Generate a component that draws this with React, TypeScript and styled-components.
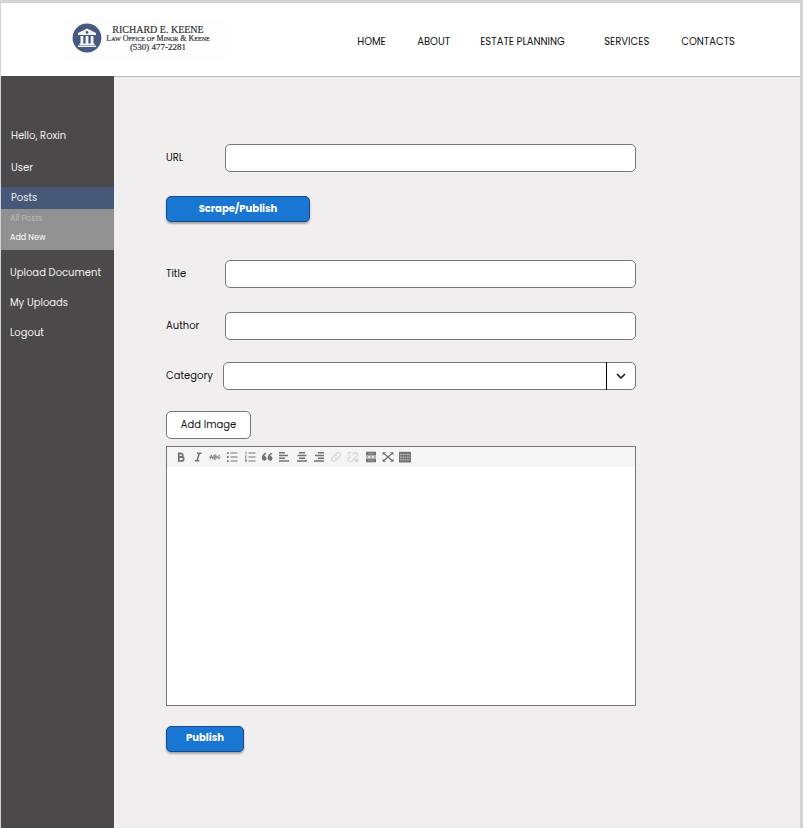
import React from "react";
import styled, { createGlobalStyle } from "styled-components";

const GlobalStyle = createGlobalStyle`
  *, *::before, *::after { box-sizing: border-box; }
  body {
    margin: 0;
    background: #d4d3d3;
    color: #111;
    font-family: Poppins, Inter, "Liberation Sans", sans-serif;
    font-size: 10px;
    line-height: 16px;
  }
  button, input, select, textarea { font: inherit; color: inherit; margin: 0; }
  a { color: inherit; text-decoration: none; }
`;

const Page = styled.div`
  display: flex;
  flex-direction: column;
  min-height: 100vh;
  padding: 3px 3px 0 1px;
`;

const Header = styled.header`
  display: flex;
  align-items: center;
  justify-content: space-between;
  height: 73px;
  padding: 0 65px 0 64px;
  background: #fff;
`;

const Brand = styled.a`
  display: flex;
  align-items: center;
  gap: 3px;
  width: 160px;
  height: 41px;
  margin-bottom: 3px;
  padding: 0 14px 0 7px;
  background: #fdfdfd;
`;

const BrandText = styled.span`
  display: flex;
  flex: 1;
  flex-direction: column;
  align-items: center;
  font-family: "Liberation Serif", serif;
  line-height: 9px;
  color: #35353a;
  white-space: nowrap;
`;

const BrandLine = styled.span<{ $size: number; $caps?: boolean }>`
  font-size: ${(p) => p.$size}px;
  font-variant-caps: ${(p) => (p.$caps ? "small-caps" : "normal")};
  -webkit-text-stroke: 0.2px;
`;

const Nav = styled.nav`
  display: grid;
  grid-template-columns: 60px 63px 124px 77px auto;
  margin-top: 4px;
  font-size: 10px;
  white-space: nowrap;
`;

const Body = styled.div`
  display: flex;
  flex: 1;
`;

const Sidebar = styled.nav`
  width: 113px;
  flex: none;
  padding-top: 50px;
  background: #4b4949;
  color: #f1f1f1;
  font-size: 10px;
`;

const SideList = styled.ul<{ $gap: number }>`
  display: flex;
  flex-direction: column;
  gap: ${(p) => p.$gap}px;
  margin: 0;
  padding: 0;
  list-style: none;
`;

const SideLink = styled.a<{ $indent: number; $active?: boolean }>`
  display: block;
  padding: ${(p) => (p.$active ? 3 : 2)}px 0 ${(p) => (p.$active ? 3 : 2)}px ${(p) => p.$indent}px;
  background: ${(p) => (p.$active ? "#455878" : "transparent")};
  white-space: nowrap;
`;

const PostsGroup = styled.div`
  margin: 9px 0 13px;
`;

const SubMenu = styled.div`
  display: flex;
  flex-direction: column;
  gap: 3px;
  padding: 2px 0 4px 9px;
  background: #929191;
  font-size: 8px;
`;

const SubLink = styled.a<{ $muted?: boolean }>`
  color: ${(p) => (p.$muted ? "#b9b8b8" : "#fff")};
`;

const Main = styled.main`
  flex: 1;
  padding: 67px 164px 64px 52px;
  border-top: 1px solid #b5b8b7;
  background: #f0eeef;
`;

const Form = styled.form`
  display: flex;
  flex-direction: column;
  align-items: flex-start;
`;

const Field = styled.div<{ $after: number; $label?: number }>`
  display: grid;
  grid-template-columns: ${(p) => p.$label ?? 59}px 1fr;
  align-items: center;
  width: 100%;
  margin-bottom: ${(p) => p.$after}px;
`;

const Label = styled.label`
  font-size: 10px;
`;

const TextInput = styled.input`
  width: 100%;
  height: 28px;
  padding: 0 8px;
  border: 1px solid #777677;
  border-radius: 5px;
  background: #fff;
`;

const SelectBox = styled.div`
  position: relative;
`;

const Select = styled.select`
  display: block;
  appearance: none;
  width: 100%;
  height: 28px;
  padding: 0 36px 0 8px;
  border: 1px solid #777677;
  border-radius: 5px;
  background: #fff;
`;

const SelectArrow = styled.span`
  position: absolute;
  inset: 0 0 0 auto;
  display: grid;
  place-items: center;
  width: 30px;
  padding: 0 2px 1px 0;
  border-left: 1px solid #000;
  pointer-events: none;
`;

const PrimaryButton = styled.button<{ $wide?: boolean }>`
  width: ${(p) => (p.$wide ? 144 : 78)}px;
  height: 26px;
  margin-bottom: ${(p) => (p.$wide ? 38 : 0)}px;
  padding: 0 0 ${(p) => (p.$wide ? 0 : 2)}px;
  border: 1px solid #174a86;
  border-radius: 5px;
  background: #1976d2;
  box-shadow: 0 2px 2px #a6a6aa;
  color: #fff;
  font-weight: 700;
`;

const PlainButton = styled.button`
  width: 85px;
  height: 28px;
  margin-bottom: 7px;
  padding: 0;
  border: 1px solid #777677;
  border-radius: 5px;
  background: #fff;
`;

const Editor = styled.div`
  width: 100%;
  margin-bottom: 20px;
  border: 1px solid #777677;
  background: #fff;
`;

const Toolbar = styled.div`
  display: flex;
  height: 20px;
  padding: 0 0 1px 5px;
  background: #f5f5f5;
`;

const Tools = styled.div`
  display: flex;
  width: 242px;
`;

const Tool = styled.button<{ $faint?: boolean }>`
  display: grid;
  place-items: center;
  flex: 1;
  padding: 0;
  border: 0;
  background: none;
  color: ${(p) => (p.$faint ? "#dadada" : "#727272")};
`;

const EditorArea = styled.textarea`
  display: block;
  width: 100%;
  height: 238px;
  padding: 8px;
  border: 0;
  outline: 0;
  resize: none;
  background: #fff;
`;

const Emblem = () => (
  <svg width="30" height="30" viewBox="0 0 30 30" aria-hidden="true">
    <circle cx="15" cy="15" r="14.4" fill="#455a7e" />
    <g fill="#f3f5f8">
      <path d="M15 5.5 24 10v2H6v-2z" />
      <path d="M8.5 13h2.8v8H8.5zM13.6 13h2.8v8h-2.8zM18.7 13h2.8v8h-2.8z" />
      <path d="M7.5 20.5h15v1.4h-15zM6 22.4h18V24H6z" />
    </g>
    <circle cx="15" cy="9.4" r="1.3" fill="#455a7e" />
  </svg>
);

const stroke = { fill: "none", stroke: "currentColor", strokeWidth: 1.5 };

const tools: { name: string; faint?: boolean; art: React.ReactNode }[] = [
  {
    name: "Bold",
    art: <path d="M3.8 2.5h2.7a1.8 1.8 0 0 1 0 3.5H3.8zM3.8 6h3a1.9 1.9 0 0 1 0 3.8h-3z" {...stroke} strokeWidth={1.8} />,
  },
  { name: "Italic", art: <path d="M5 2.2h4.5M2.800 9.8h4.5M7.3 2.2 5 9.8" {...stroke} /> },
  {
    name: "Strikethrough",
    art: (
      <>
        <path
          d="M1 8.2 2.4 4l1.4 4.200M5 4v4.200h1.200a1 1 0 0 0 0-2.100 1 1 0 0 0 0-2.100zM11 4.500a1.700 1.700 0 1 0 0 3.200"
          {...stroke}
          strokeWidth={0.9}
        />
        <path d="M.3 6.200h11.400" {...stroke} strokeWidth={0.8} />
      </>
    ),
  },
  {
    name: "Bulleted list",
    art: (
      <>
        <path d="M4.500 2h7M4.500 6h7M4.500 10h7" {...stroke} strokeWidth={1.1} />
        <path d="M1 1.200h1.700v1.700H1zM1 5.200h1.700v1.700H1zM1 9.200h1.700v1.700H1z" fill="currentColor" />
      </>
    ),
  },
  {
    name: "Numbered list",
    art: (
      <>
        <path d="M4.500 2h7M4.500 6h7M4.500 10h7" {...stroke} strokeWidth={1.1} />
        <path d="M1.200 1.200h.9v2.300M1 4.900h1.300L1.100 7h1.400M1 8.500h1.300v1H1.400h.9v1.200H1" {...stroke} strokeWidth={0.7} />
      </>
    ),
  },
  {
    name: "Quote",
    art: (
      <path
        d="M5.300 1.800C2.500 2.100.8 4.200.8 7.300a2.400 2.400 0 1 0 2.700-2.400C3.600 4 4.200 3.300 5.300 3.100zM11.200 1.800C8.400 2.100 6.700 4.200 6.700 7.300a2.400 2.400 0 1 0 2.700-2.400C9.500 4 10.100 3.300 11.200 3.100z"
        fill="currentColor"
      />
    ),
  },
  { name: "Align left", art: <path d="M1 1.700h6M1 4.500h9M1 7.300h6M1 10.100h10" {...stroke} /> },
  { name: "Align center", art: <path d="M3 1.700h6M1.500 4.500h9M3 7.300h6M1 10.100h10" {...stroke} /> },
  { name: "Align right", art: <path d="M5 1.700h6M2 4.500h9M5 7.300h6M1 10.100h10" {...stroke} /> },
  {
    name: "Insert link",
    faint: true,
    art: (
      <path
        d="m5.500 3.400 1.300-1.300a2.200 2.200 0 0 1 3.100 3.100L8.200 6.900a2.200 2.200 0 0 1-3 0M6.500 8.600 5.200 9.900a2.200 2.200 0 0 1-3.100-3.100l1.700-1.700a2.200 2.200 0 0 1 3 0"
        {...stroke}
      />
    ),
  },
  {
    name: "Remove link",
    faint: true,
    art: (
      <path
        d="m5.500 3.400 1.300-1.300a2.200 2.200 0 0 1 3.100 3.100L4.800 10.200a2.200 2.200 0 0 1-3.100-3.100l1.700-1.700M1.500 4.500v-3h3M7.500 10.500h3v-3M7.500 7.500l3 3"
        {...stroke}
      />
    ),
  },
  {
    name: "Insert more tag",
    art: (
      <>
        <path d="M1 .8h10v3.600H1zM1 7.600h10v3.600H1z" fill="currentColor" />
        <path d="M1 6h2.400M4.800 6h2.400M8.600 6H11" {...stroke} strokeWidth={1.100} />
        <path d="M3 2.600h6M3 9.400h6" stroke="#aaa" strokeWidth=".7" />
      </>
    ),
  },
  {
    name: "Fullscreen",
    art: (
      <>
        <path d="m2 2.500 8 7M10 2.500l-8 7" {...stroke} strokeWidth={1.2} />
        <path d="M.5 1.200H4L.5 4.300zM11.500 1.200H8l3.500 3.100zM.5 10.800H4L.5 7.700zM11.500 10.800H8l3.500-3.100z" fill="currentColor" />
      </>
    ),
  },
  {
    name: "Toolbar toggle",
    art: (
      <>
        <path d="M0 .8h12v10.700H0z" fill="currentColor" />
        <path d="M1 3.600h10M1 6.200h10M1 8.800h10" stroke="#d6d6d6" strokeWidth=".9" strokeDasharray="1.700 .6" />
      </>
    ),
  },
];

export default function App() {
  return (
    <>
      <GlobalStyle />
      <Page>
        <Header>
          <Brand href="#home">
            <Emblem />
            <BrandText>
              <BrandLine $size={10}>RICHARD E. KEENE</BrandLine>
              <BrandLine $size={8} $caps>Law Office of Minor &amp; Keene</BrandLine>
              <BrandLine $size={9}>(530) 477-2281</BrandLine>
            </BrandText>
          </Brand>
          <Nav aria-label="Main">
            <a href="#home">HOME</a>
            <a href="#about">ABOUT</a>
            <a href="#estate-planning">ESTATE PLANNING</a>
            <a href="#services">SERVICES</a>
            <a href="#contacts">CONTACTS</a>
          </Nav>
        </Header>
        <Body>
          <Sidebar aria-label="Account">
            <SideList $gap={12}>
              <li><SideLink href="#profile" $indent={10}>Hello, Roxin</SideLink></li>
              <li><SideLink href="#user" $indent={10}>User</SideLink></li>
            </SideList>
            <PostsGroup>
              <SideLink href="#posts" $indent={10} $active>Posts</SideLink>
              <SubMenu>
                <SubLink href="#all-posts" $muted>All Posts</SubLink>
                <SubLink href="#add-new">Add New</SubLink>
              </SubMenu>
            </PostsGroup>
            <SideList $gap={10}>
              <li><SideLink href="#upload" $indent={9}>Upload Document</SideLink></li>
              <li><SideLink href="#my-uploads" $indent={9}>My Uploads</SideLink></li>
              <li><SideLink href="#logout" $indent={9}>Logout</SideLink></li>
            </SideList>
          </Sidebar>
          <Main>
            <Form onSubmit={(e) => e.preventDefault()}>
              <Field $after={24}>
                <Label htmlFor="url">URL</Label>
                <TextInput id="url" type="url" />
              </Field>
              <PrimaryButton type="button" $wide>Scrape/Publish</PrimaryButton>
              <Field $after={24}>
                <Label htmlFor="title">Title</Label>
                <TextInput id="title" type="text" />
              </Field>
              <Field $after={22}>
                <Label htmlFor="author">Author</Label>
                <TextInput id="author" type="text" />
              </Field>
              <Field $after={21} $label={57}>
                <Label htmlFor="category">Category</Label>
                <SelectBox>
                  <Select id="category" defaultValue="">
                    <option value="" />
                  </Select>
                  <SelectArrow>
                    <svg width="10" height="6" viewBox="0 0 10 6" aria-hidden="true">
                      <path d="m1 1 4 4 4-4" fill="none" stroke="#111" strokeWidth="1.5" />
                    </svg>
                  </SelectArrow>
                </SelectBox>
              </Field>
              <PlainButton type="button">Add Image</PlainButton>
              <Editor>
                <Toolbar role="toolbar" aria-label="Formatting">
                  <Tools>
                    {tools.map((tool) => (
                      <Tool key={tool.name} type="button" aria-label={tool.name} $faint={tool.faint}>
                        <svg width="12" height="12" viewBox="0 0 12 12" aria-hidden="true">
                          {tool.art}
                        </svg>
                      </Tool>
                    ))}
                  </Tools>
                </Toolbar>
                <EditorArea aria-label="Post content" />
              </Editor>
              <PrimaryButton type="submit">Publish</PrimaryButton>
            </Form>
          </Main>
        </Body>
      </Page>
    </>
  );
}
